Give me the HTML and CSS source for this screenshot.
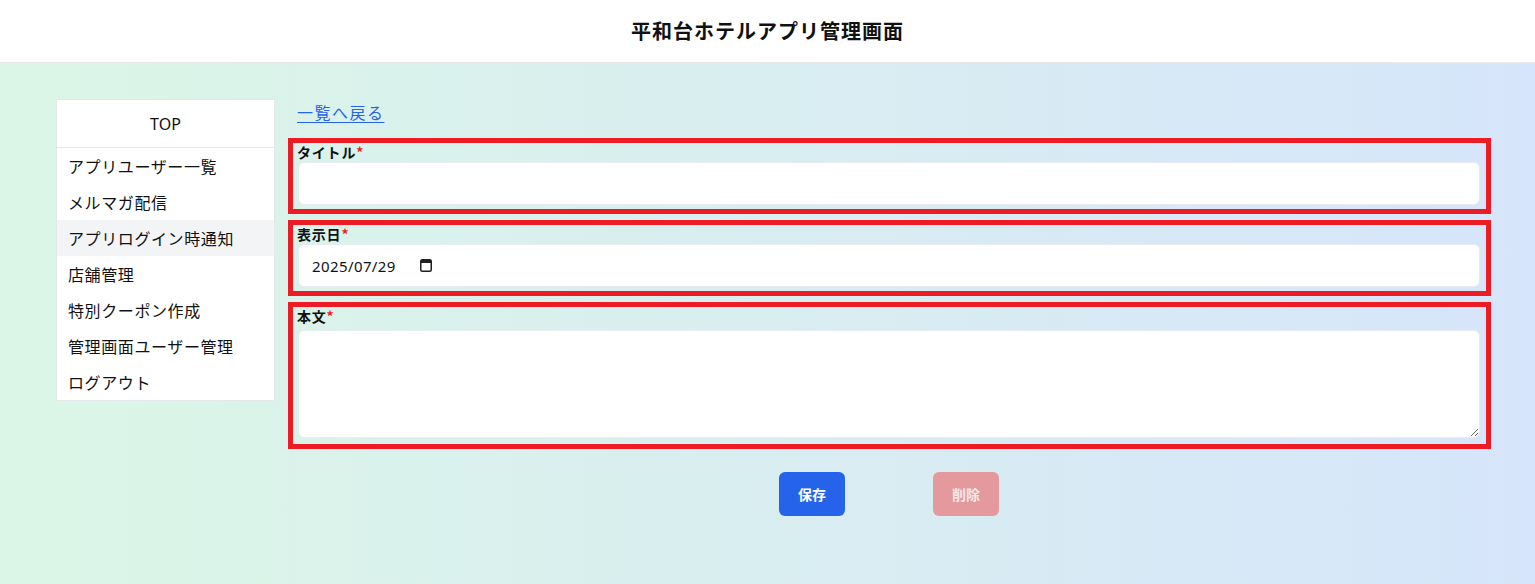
FILE: index.html
```html
<!DOCTYPE html>
<html lang="ja">
<head>
<meta charset="utf-8">
<title>平和台ホテルアプリ管理画面</title>
<link rel="stylesheet" href="styles.css">
</head>
<body>
<header class="header">
  <h1 class="header-title">平和台ホテルアプリ管理画面</h1>
</header>
<div class="page">
  <nav class="sidebar">
    <div class="sidebar-top">TOP</div>
    <ul class="menu">
      <li class="menu-item">アプリユーザー一覧</li>
      <li class="menu-item">メルマガ配信</li>
      <li class="menu-item menu-item-active">アプリログイン時通知</li>
      <li class="menu-item">店舗管理</li>
      <li class="menu-item">特別クーポン作成</li>
      <li class="menu-item">管理画面ユーザー管理</li>
      <li class="menu-item">ログアウト</li>
    </ul>
  </nav>
  <main class="main">
    <a class="back-link" href="#">一覧へ戻る</a>
    <div class="field field-first">
      <label class="field-label">タイトル<span class="req">*</span></label>
      <input class="field-input" type="text">
    </div>
    <div class="field">
      <label class="field-label">表示日<span class="req">*</span></label>
      <div class="date-wrap">
        <span class="date-value">2025/07/29</span>
        <svg class="date-icon" width="12" height="14" viewBox="0 0 12 14" aria-hidden="true">
          <rect x="0.75" y="1.75" width="10.5" height="11.5" rx="1.5" fill="none" stroke="#1f1f1f" stroke-width="1.5"/>
          <rect x="1" y="2" width="10" height="3" fill="#1f1f1f"/>
        </svg>
      </div>
    </div>
    <div class="field field-body">
      <label class="field-label">本文<span class="req">*</span></label>
      <textarea class="field-textarea"></textarea>
    </div>
    <div class="actions">
      <button class="btn btn-save">保存</button>
      <button class="btn btn-delete">削除</button>
    </div>
  </main>
</div>
</body>
</html>
```
FILE: styles.css
```css
* { box-sizing: border-box; }
html, body { margin: 0; padding: 0; }
body {
  font-family: "Noto Sans", "Noto Sans CJK JP", sans-serif;
  color: #111827;
  height: 584px;
  overflow: hidden;
  display: flex;
  flex-direction: column;
}
.header {
  height: 63px;
  flex-shrink: 0;
  background: #ffffff;
  border-bottom: 1px solid #e5e7eb;
  display: flex;
  align-items: center;
  justify-content: center;
}
.header-title {
  margin: 0;
  font-family: "Noto Sans CJK JP", sans-serif;
  font-size: 20px;
  letter-spacing: 1px;
  font-weight: 700;
  color: #111111;
  line-height: 1;
  padding-bottom: 1px;
}
.page {
  flex: 1;
  display: flex;
  align-items: flex-start;
  padding: 36px 44px 0 56px;
  background: linear-gradient(to right, #dbf6e6, #d6e5fb);
}
.sidebar {
  width: 219px;
  background: #ffffff;
  border: 1px solid #e5e7eb;
  font-family: "Noto Sans CJK JP", sans-serif;
  flex-shrink: 0;
}
.sidebar-top {
  height: 48px;
  border-bottom: 1px solid #e5e7eb;
  display: flex;
  align-items: center;
  justify-content: center;
  font-family: "Noto Sans", sans-serif;
  font-size: 16px;
  color: #111;
}
.menu { list-style: none; margin: 0; padding: 0; }
.menu-item {
  height: 36px;
  display: flex;
  align-items: center;
  padding-left: 11px;
  font-size: 16px;
  letter-spacing: 0.6px;
  color: #111;
}
.menu-item-active { background: #f3f4f6; }
.main {
  flex: 1;
  margin-left: 13px;
  font-family: "Noto Sans CJK JP", sans-serif;
}
.back-link {
  display: inline-block;
  margin-left: 9px;
  margin-top: 1px;
  font-size: 16px;
  letter-spacing: 1.5px;
  line-height: 24px;
  color: #2563eb;
  text-decoration: underline;
  text-underline-offset: 3px;
}
.field {
  border: 5px solid #ed1c24;
  padding: 0 6px 4px 5px;
  margin-top: 6px;
}
.field-first { margin-top: 14px; }
.field-label {
  display: block;
  font-size: 14px;
  font-weight: 700;
  letter-spacing: 0.8px;
  line-height: 18px;
  height: 19px;
  color: #111;
  margin-left: -1px;
}
.req { color: #ef1c1c; letter-spacing: 0; }
.field-input, .date-wrap {
  display: block;
  width: 100%;
  height: 43px;
  background: #ffffff;
  border: 1px solid #e6ecf2;
  border-radius: 6px;
  outline: none;
}
.date-wrap {
  display: flex;
  align-items: center;
  gap: 24px;
  padding-left: 13px;
}
.date-value {
  font-family: "Noto Sans", sans-serif;
  font-size: 15px;
  color: #111;
  letter-spacing: 0.4px;
  margin-top: 1px;
}
.date-icon { display: block; margin-top: -2px; }
.field-body { padding-bottom: 6px; }
.field-body .field-label { margin-bottom: 4px; }
.field-textarea {
  display: block;
  width: 100%;
  height: 108px;
  background: #fff;
  border: 1px solid #e6ecf2;
  border-radius: 6px;
  resize: vertical;
  outline: none;
}
.actions {
  display: flex;
  justify-content: center;
  gap: 88px;
  margin-top: 23px;
  margin-left: -1px;
}
.btn {
  width: 66px;
  height: 44px;
  border: none;
  border-radius: 6px;
  font-family: "Noto Sans CJK JP", sans-serif;
  font-size: 14px;
  font-weight: 700;
  color: #ffffff;
}
.btn-save { background: #2563eb; }
.btn-delete { background: #e49a9c; color: #f5e8ec; }
```
